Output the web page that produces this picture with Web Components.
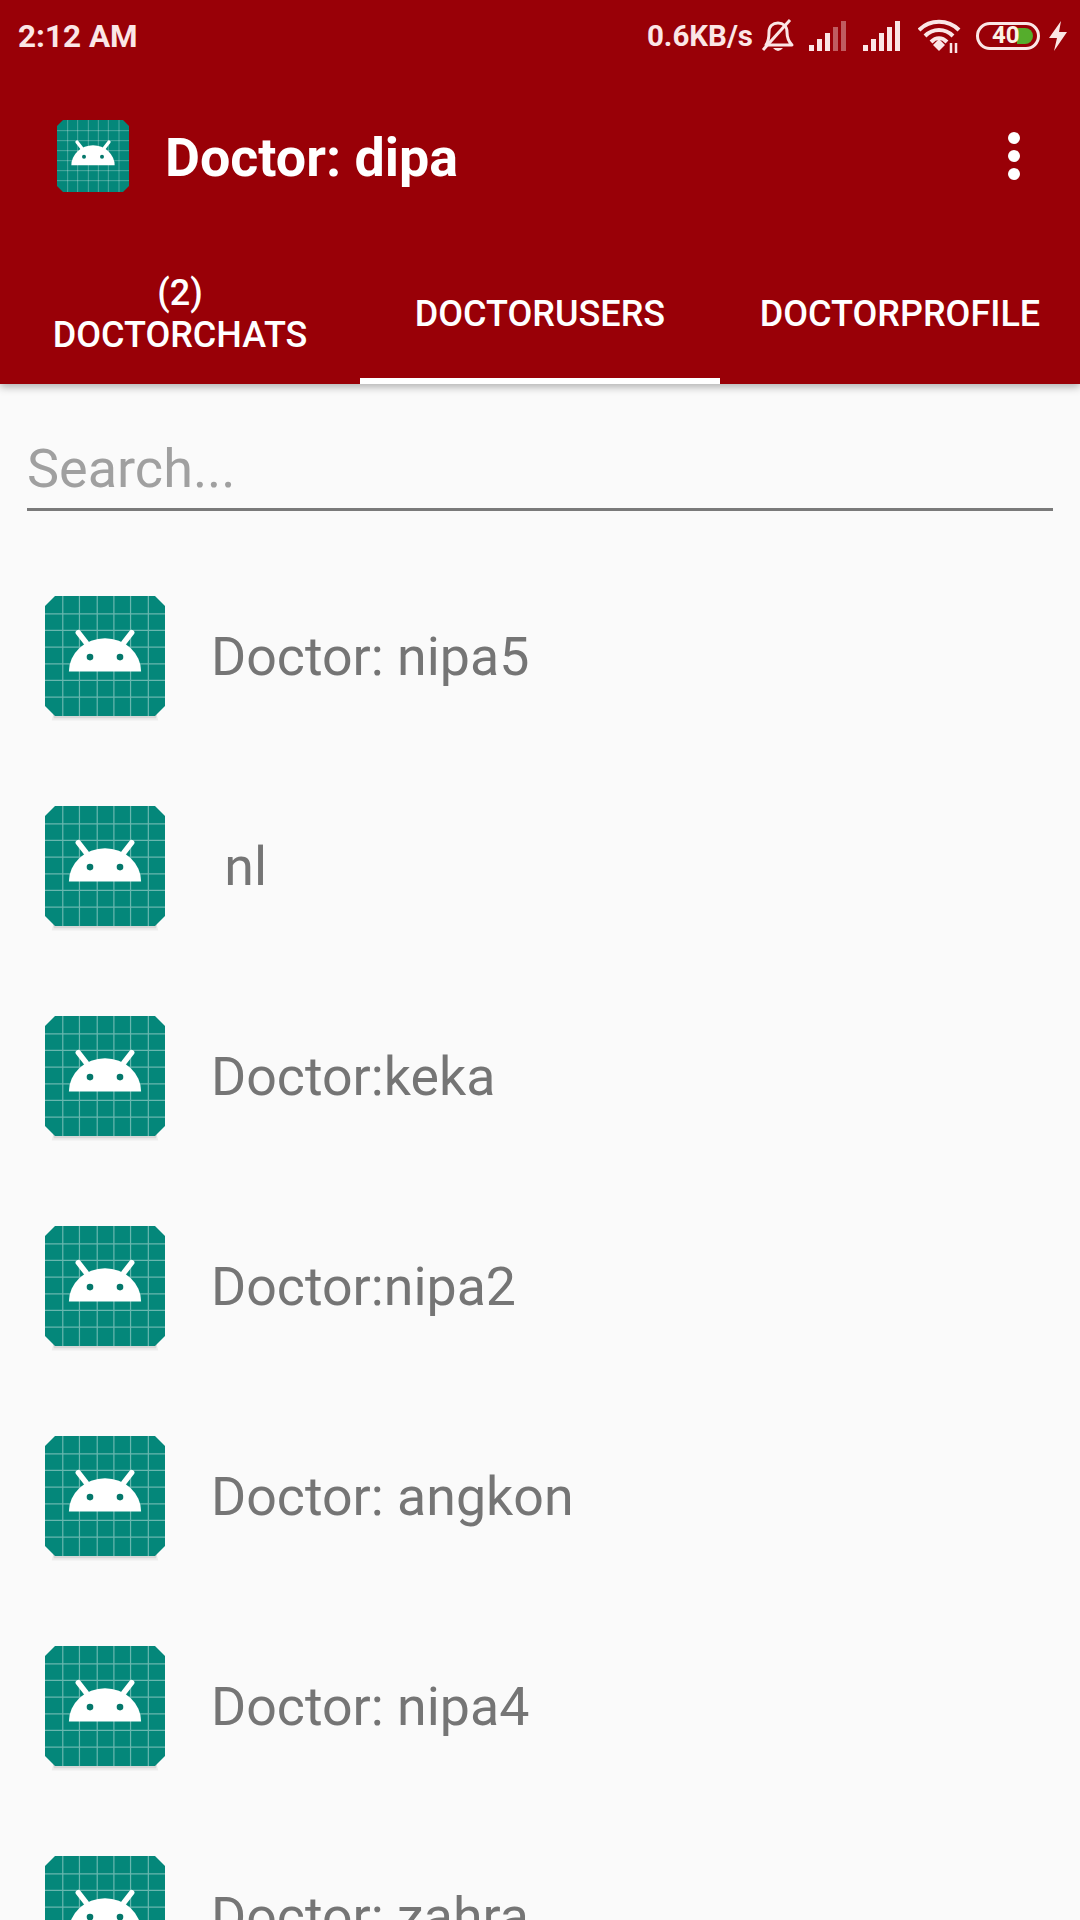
<!DOCTYPE html>
<html>
<head>
<meta charset="utf-8">
<style>
  html, body { margin: 0; padding: 0; }
  body { width: 1080px; height: 1920px; overflow: hidden; background: #fafafa; font-family: Roboto, sans-serif; }
</style>
</head>
<body>
<doctor-app></doctor-app>

<template id="app-icon-tpl">
  <style>
    :host { display: block; width: var(--size, 120px); height: var(--size, 120px); flex: none; }
    svg { display: block; width: 100%; height: 100%; overflow: visible; }
    .drop { display: var(--icon-shadow, none); }
  </style>
  <svg viewBox="0 0 108 108">
    <g class="drop" fill="#000">
      <path d="M9 100H99L102 112H6Z" opacity=".05"/>
      <path d="M6 100H102L100 110H8Z" opacity=".09"/>
    </g>
    <path d="M9 0H99L108 9V99L99 108H9L0 99V9Z" fill="#04877a"/>
    <path d="M0 16H108M0 31H108M0 46H108M0 61H108M0 76H108M0 91H108M16 0V108M31 0V108M47 0V108M62 0V108M77 0V108M93 0V108" fill="none" stroke="#fff" stroke-opacity=".4" stroke-width="1.100"/>
    <path d="M21.500 68A32.500 30 0 0 1 86.500 68Z" fill="#fff"/>
    <path d="M30 33L37 42M78 33L71 42" stroke="#fff" stroke-width="5" stroke-linecap="round"/>
    <circle cx="40.500" cy="55" r="3" fill="#04776b"/>
    <circle cx="67.500" cy="55" r="3" fill="#04776b"/>
  </svg>
</template>

<script>
class StatusBar extends HTMLElement {
  constructor() {
    super();
    this.attachShadow({ mode: 'open' });
  }

  connectedCallback() {
    this.shadowRoot.innerHTML = `
      <style>
        :host {
          display: flex;
          align-items: center;
          justify-content: space-between;
          height: 72px;
          padding: 0 12px 0 18px;
          color: #fbe6e6;
          font: 700 29.5px Roboto, sans-serif;
        }
        .time { font-size: 31.5px; }
        .right { display: flex; align-items: center; }
        svg { display: block; }
      </style>
      <span class="time">2:12 AM</span>
      <div class="right">
        <span>0.6KB/s</span>
        <svg width="38" height="38" viewBox="0 0 38 38" style="margin-left:6px">
          <path d="M7 28C10 24 10 20 10 15C10 9 14 6 19 6S28 9 28 15C28 20 29 24 33 28Z" fill="none" stroke="#fbe6e6" stroke-width="3" stroke-linejoin="round"/>
          <path d="M14 31Q19 37 24 31Z" fill="#fbe6e6"/>
          <path d="M4 33L31 3" stroke="#fbe6e6" stroke-width="3"/>
        </svg>
        <svg width="40" height="30" viewBox="0 0 40 30" style="margin-left:11px">
          <path d="M1 24H6V30H1ZM9 18H14V30H9ZM17 12H22V30H17Z" fill="#fbe6e6"/>
          <path d="M25 6H30V30H25ZM33 0H38V30H33Z" fill="#fbe6e6" opacity=".4"/>
        </svg>
        <svg width="40" height="30" viewBox="0 0 40 30" style="margin-left:14px">
          <path d="M1 24H6V30H1ZM9 18H14V30H9ZM17 12H22V30H17ZM25 6H30V30H25ZM33 0H38V30H33Z" fill="#fbe6e6"/>
        </svg>
        <svg width="44" height="34" viewBox="0 0 44 34" style="margin-left:16px">
          <path d="M1 11C12 0 30 0 41 11M7 17C15 9 27 9 35 17M13 23C18 18 24 18 29 23" fill="none" stroke="#fbe6e6" stroke-width="4"/>
          <path d="M15 26L21 20L27 26L21 32Z" fill="#fbe6e6"/>
          <path d="M33 24V34M38 24V34" stroke="#fbe6e6" stroke-width="2.500"/>
        </svg>
        <battery-pill style="margin-left:14px"></battery-pill>
        <svg width="20" height="30" viewBox="0 0 20 30" style="margin-left:8px">
          <path d="M13 0L1 17H9L6 30L19 11H11Z" fill="#fbe6e6"/>
        </svg>
      </div>
    `;
  }
}

class BatteryPill extends HTMLElement {
  constructor() {
    super();
    this.attachShadow({ mode: 'open' });
  }

  connectedCallback() {
    this.shadowRoot.innerHTML = `
      <style>
        :host {
          display: block;
          position: relative;
          box-sizing: border-box;
          width: 64px;
          height: 28px;
          border: 3px solid #fbe6e6;
          border-radius: 14px;
        }
        .fill {
          position: absolute;
          left: 38px;
          top: 3px;
          width: 16px;
          height: 16px;
          background: #55ad2c;
          border-radius: 0 9px 9px 0;
        }
        .num {
          position: absolute;
          left: 13px;
          top: -2px;
          font: 700 24px/25px Roboto, sans-serif;
          color: #fbf3e6;
        }
      </style>
      <div class="fill"></div>
      <span class="num">40</span>
    `;
  }
}

class AppIcon extends HTMLElement {
  constructor() {
    super();
    const root = this.attachShadow({ mode: 'open' });
    root.appendChild(document.getElementById('app-icon-tpl').content.cloneNode(true));
  }
}

class AppToolbar extends HTMLElement {
  constructor() {
    super();
    this.attachShadow({ mode: 'open' });
  }

  connectedCallback() {
    this.shadowRoot.innerHTML = `
      <style>
        :host {
          display: flex;
          align-items: center;
          height: 168px;
          padding-left: 57px;
          box-sizing: border-box;
          color: #fff;
        }
        app-icon { --size: 72px; }
        .title {
          margin: 2px 0 0 36px;
          font: 700 53.8px Roboto, sans-serif;
          flex: 1;
        }
        .menu {
          display: flex;
          flex-direction: column;
          gap: 6px;
          margin-right: 60px;
        }
        .menu i { display: block; width: 12px; height: 12px; border-radius: 50%; background: #fff; }
      </style>
      <app-icon></app-icon>
      <div class="title"><slot></slot></div>
      <div class="menu"><i></i><i></i><i></i></div>
    `;
  }
}

class TabStrip extends HTMLElement {
  constructor() {
    super();
    this.attachShadow({ mode: 'open' });
  }

  connectedCallback() {
    this.shadowRoot.innerHTML = `
      <style>
        :host {
          display: grid;
          grid-template-columns: repeat(3, 1fr);
          height: 144px;
        }
      </style>
      <slot></slot>
    `;
  }
}

class TabItem extends HTMLElement {
  constructor() {
    super();
    this.attachShadow({ mode: 'open' });
  }

  connectedCallback() {
    this.shadowRoot.innerHTML = `
      <style>
        :host {
          display: flex;
          align-items: center;
          justify-content: center;
          box-sizing: border-box;
          height: 144px;
          padding-top: 10px;
          text-align: center;
          color: #fff;
          font: 500 36px/42px Roboto, sans-serif;
          border-bottom: 6px solid transparent;
        }
        :host([active]) { border-bottom-color: #fff; }
        div { white-space: pre-line; }
      </style>
      <div><slot></slot></div>
    `;
  }
}

class SearchField extends HTMLElement {
  constructor() {
    super();
    this.attachShadow({ mode: 'open' });
  }

  connectedCallback() {
    this.shadowRoot.innerHTML = `
      <style>
        :host {
          display: block;
          margin: 0 27px;
          padding-top: 54px;
          height: 127px;
          box-sizing: border-box;
          border-bottom: 3px solid #7a7a7a;
          color: #a0a0a0;
          font: 400 54px/62px Roboto, sans-serif;
        }
      </style>
      <slot></slot>
    `;
  }
}

class UserRow extends HTMLElement {
  constructor() {
    super();
    this.attachShadow({ mode: 'open' });
  }

  connectedCallback() {
    this.shadowRoot.innerHTML = `
      <style>
        :host {
          display: flex;
          align-items: center;
          height: 210px;
          padding-left: 45px;
          color: #757575;
          font: 400 53.7px Roboto, sans-serif;
        }
        app-icon { --size: 120px; --icon-shadow: block; }
        .name { margin-left: 46px; white-space: pre; }
      </style>
      <app-icon></app-icon>
      <div class="name"><slot></slot></div>
    `;
  }
}

class DoctorApp extends HTMLElement {
  constructor() {
    super();
    this.attachShadow({ mode: 'open' });
  }

  connectedCallback() {
    const users = ['Doctor: nipa5', ' nl', 'Doctor:keka', 'Doctor:nipa2', 'Doctor: angkon', 'Doctor: nipa4', 'Doctor: zahra'];
    this.shadowRoot.innerHTML = `
      <style>
        :host { display: block; height: 1920px; overflow: hidden; }
        header {
          background: #990007;
          box-shadow: 0 3px 8px rgba(0,0,0,.3);
          position: relative;
        }
        .list { padding-top: 40px; }
      </style>
      <header>
        <status-bar></status-bar>
        <app-toolbar>Doctor: dipa</app-toolbar>
        <tab-strip>
          <tab-item>(2)
DOCTORCHATS</tab-item>
          <tab-item active>DOCTORUSERS</tab-item>
          <tab-item>DOCTORPROFILE</tab-item>
        </tab-strip>
      </header>
      <search-field>Search...</search-field>
      <div class="list">
        ${users.map(name => `<user-row>${name}</user-row>`).join('')}
      </div>
    `;
  }
}

customElements.define('battery-pill', BatteryPill);
customElements.define('status-bar', StatusBar);
customElements.define('app-icon', AppIcon);
customElements.define('app-toolbar', AppToolbar);
customElements.define('tab-strip', TabStrip);
customElements.define('tab-item', TabItem);
customElements.define('search-field', SearchField);
customElements.define('user-row', UserRow);
customElements.define('doctor-app', DoctorApp);
</script>
</body>
</html>
